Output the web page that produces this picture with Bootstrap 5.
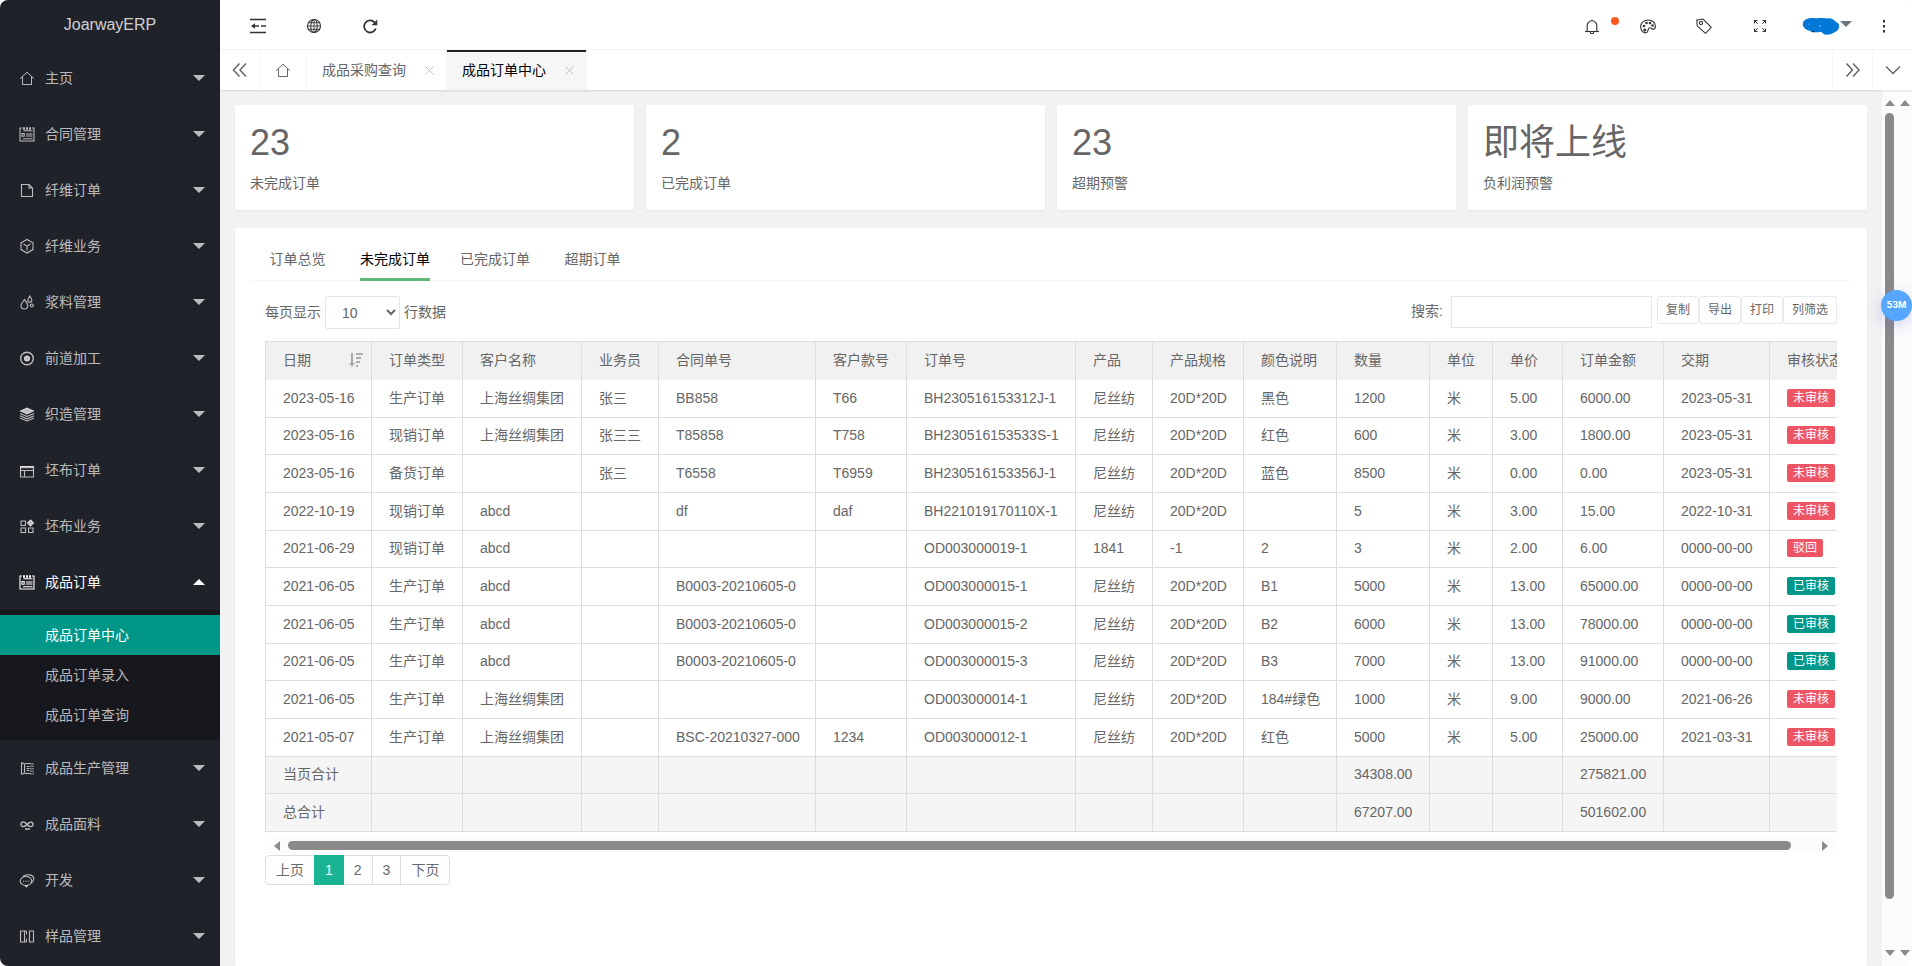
<!DOCTYPE html>
<html lang="zh-CN">
<head>
<meta charset="utf-8">
<meta name="viewport" content="width=device-width, initial-scale=1">
<title>JoarwayERP</title>
<link href="https://cdn.jsdelivr.net/npm/bootstrap@5.3.0/dist/css/bootstrap.min.css" rel="stylesheet">
<style>
  body { font-family: "Liberation Sans", "Noto Sans CJK SC", sans-serif; font-size: 14px; line-height: 20px; color: #666; background: #fff; }
  a { color: inherit; text-decoration: none; }
  svg { display: block; flex: none; }
  .ico { width: 16px; height: 16px; fill: none; stroke: currentColor; stroke-width: 1.1; }
  .app { height: 100vh; border-radius: 8px; background: #f2f2f2; }

  /* sidebar */
  .side { width: 220px; background: #20222a; color: rgba(255,255,255,.7); }
  .brand { height: 50px; font-size: 16px; box-shadow: 0 1px 2px rgba(0,0,0,.15); color: rgba(255,255,255,.8); }
  .side-link { height: 56px; padding: 0 15px 0 19px; gap: 10px; }
  .side-link.open { color: #fff; }
  .tri { width: 0; height: 0; border: 6px solid transparent; border-top-color: currentColor; border-bottom: 0; }
  .tri.up { border-top: 0; border-bottom: 6px solid currentColor; }
  .sub { background: #17181d; padding: 5px 0; }
  .sub a { height: 40px; padding-left: 45px; }
  .sub a.on { background: #009688; color: #fff; }

  /* header and page tabs */
  .topbar { height: 50px; background: #fff; border-bottom: 1px solid #f6f6f6; color: #333; padding-left: 10px; }
  .tool { width: 56px; height: 49px; padding-top: 2px; }
  .tool.user { width: 68px; padding-left: 10px; }
  .dot { width: 8px; height: 8px; top: 17px; right: 1px; background: #ff5722; }
  .pages { height: 40px; background: #fff; box-shadow: 0 1px 2px rgba(0,0,0,.12); z-index: 1; }
  .ctl { width: 40px; border-right: 1px solid #f6f6f6; }
  .ctl.end { border-right: 0; border-left: 1px solid #f6f6f6; }
  .pg { width: 140px; padding: 0 12px 0 15px; border-right: 1px solid #f6f6f6; }
  .pg.home { width: 47px; padding: 0; }
  .pg.on { background: #f6f6f6; color: #000; box-shadow: inset 0 2px #20222a; }
  .x { width: 9px; height: 9px; stroke: #c2c2c2; fill: none; }

  /* content */
  .content { padding: 15px 15px 0; }
  .stats { --bs-gutter-x: 12px; }
  .box { background: #fff; border-radius: 2px; box-shadow: 0 1px 2px rgba(0,0,0,.05); }
  .stat { height: 105px; padding: 15px; }
  .num { font-size: 36px; line-height: 46px; }
  .stat p { margin: 7px 0 0; }
  .panel { margin-top: 18px; padding: 13px 15px 0; }
  .tabs { height: 40px; border-bottom: 1px solid #f6f6f6; }
  .tabs li { padding: 0 15px; }
  .tabs a { min-width: 65px; height: 40px; padding-top: 8px; text-align: center; display: block; }
  .tabs a.on { color: #000; border-bottom: 3px solid #5fb878; }
  .inner { padding: 15px 15px 0; }
  .inner label, .inner label + select + span { padding-bottom: 2px; }
  .len { width: 75px; height: 33px; margin: 0 4px; padding: 0 0 0 12px; border: 1px solid #e6e6e6; background: #fff; color: #666; border-radius: 2px; }
  .find { width: 201px; height: 32px; margin: 0 5px 0 8px; border: 1px solid #e6e6e6; }
  .tb { height: 28px; padding: 0 8px; border: 1px solid #e7eaec; border-radius: 3px; background: #fff; color: #666; font-size: 12px; }

  .grid { table-layout: fixed; width: 1608px; height: 491px; border-collapse: collapse; white-space: nowrap; }
  .grid th, .grid td { border: 1px solid #ddd; padding: 0 0 1px 17px; font-weight: 400; }
  .grid th { background: #f1f1f1; height: 38px; border-bottom: 0; }
  .grid tbody tr { height: 37px; }
  .grid tbody tr:first-child td { border-top: 0; }
  .grid .sum td { background: #f5f5f5; }
  .tag { display: block; width: fit-content; height: 18px; padding: 0 6px; border-radius: 2px; font-size: 12px; line-height: 18px; color: #fff; background: #ed5565; }
  .tag.ok { background: #009688; }
  .c70 { width: 70px; } .c91 { width: 91px; } .c106 { width: 106px; } .c93 { width: 93px; } .c77 { width: 77px; }
  .c119 { width: 119px; } .c157 { width: 157px; } .c169 { width: 169px; } .c63 { width: 63px; } .c101 { width: 101px; }

  .hbar { height: 15px; margin-top: 6px; padding: 0 9px; background: #fcfcfc; color: #8a8a8a; gap: 8px; }
  .hbar i, .vbar i { background: #8a8a8a; border-radius: 5px; }
  .hbar i { height: 9px; flex: 0 1 1503px; }
  .pager { margin: 2px 0 0; --bs-pagination-font-size: 14px; --bs-pagination-padding-x: 10px; --bs-pagination-padding-y: 4px; --bs-pagination-color: #676a6c; --bs-pagination-border-color: #ddd; --bs-pagination-active-bg: #1ab394; --bs-pagination-active-border-color: #1ab394; --bs-pagination-border-radius: 4px; }

  .vbar { width: 15px; padding: 10px 0; background: #fcfcfc; color: #8a8a8a; }
  .vbar i { width: 9px; flex: 0 1 786px; margin-top: 7px; }
  .ball { width: 31px; height: 31px; top: 290px; right: 0; z-index: 5; background: #56a5ff; color: #fff; font: bold 9px/30px Inter, sans-serif; box-shadow: 0 4px 16px rgba(80,80,220,.25); }
</style>
</head>
<body class="overflow-hidden">
<svg width="0" height="0" class="position-absolute" aria-hidden="true">
  <symbol id="home" viewBox="0 0 16 16"><path d="M1 8.700 8 2.200l7 6.500M3.500 7v7.500h9V7" stroke-width="1"/></symbol>
  <symbol id="form" viewBox="0 0 16 16"><path d="M3 2H1v13h14V2h-2M4.500 4.800h9M7 8h6.500M7 10h6.500M4 12.700h9.500"/><path d="M3 7.500h2.200v2.800H3z"/><path d="M4 2.500h2M7 2.500h2M10 2.500h2" stroke-width="2.500"/></symbol>
  <symbol id="file" viewBox="0 0 16 16"><path d="M2.500 2.500h7.500l3.500 3.500v8.500h-11zM10 2.500V6h3.500"/></symbol>
  <symbol id="cube" viewBox="0 0 16 16"><path d="M8 1.500 14 4.800v6.800L8 15 2 11.600V4.800zM4.500 6 8 8.200 11.500 6M8 8.200V12.500"/></symbol>
  <symbol id="drops" viewBox="0 0 16 16"><path d="M5.500 5.500C4 8 2 9.500 2 11.600a3.400 3.400 0 0 0 6.800 0C8.800 9.500 7 8 5.500 5.500zM10.800 2C10 3.800 8.800 4.800 8.800 6.200a2 2 0 0 0 4 0C12.800 4.800 11.600 3.800 10.800 2z"/><circle cx="12.800" cy="11.500" r="1.500"/></symbol>
  <symbol id="radio" viewBox="0 0 16 16"><circle cx="8" cy="8.500" r="6.300" stroke-width="1.400"/><circle cx="8" cy="8.500" r="2.500" fill="currentColor"/></symbol>
  <symbol id="layers" viewBox="0 0 16 16"><path d="M1.500 5 8 2l6.500 3L8 8z" fill="currentColor"/><path d="M1 7.500 8 10.500l7-3M1 9.800l7 3 7-3M1 12l7 3 7-3"/></symbol>
  <symbol id="window" viewBox="0 0 16 16"><path d="M1.500 4.500h13v10.500h-13zM1.500 8.500h13M5.500 8.500V15"/><path d="M1.500 5.200h13" stroke-width="2"/></symbol>
  <symbol id="apps" viewBox="0 0 16 16"><path d="M2 3h4.500v4.500H2zM2 10h4.500v4.500H2zM9.500 10H14v4.500H9.500z"/><path d="m11.500 2 3 3-3 3-3-3z" fill="currentColor"/></symbol>
  <symbol id="list" viewBox="0 0 16 16"><path d="M2.500 2.500v12M2.500 2.500 5.500 4v9L2.500 14.500M6 3.500h5.500M6 13.500h5.500M7.500 6.500h3M7.500 8.500h3M7.500 10.500h3"/><path d="M12 3v11.500M14 3v11.500" stroke-dasharray="1.500 1"/></symbol>
  <symbol id="link" viewBox="0 0 16 16"><path d="M8 8.500C6 5.500 2 5 2 8.300S6 11 8 8.500s6-3.500 6-.2S10 11 8 8.500zM6 13h5" stroke-width="1.400"/></symbol>
  <symbol id="chat" viewBox="0 0 16 16"><ellipse cx="7" cy="9" rx="5.800" ry="4.500"/><path d="M4 4.500C7 1.500 14.800 2.300 14.800 6.800c0 2-1 3.200-2.300 4M4 9.200h1.200M6.500 9.200h1.200M9 9.200h1.200M6 13.500l1.500 1.500 1.500-1.800"/></symbol>
  <symbol id="cols" viewBox="0 0 16 16"><path d="M1.500 3h4v11h-4zM10.500 3h4v11h-4zM7.500 3v3.500M7.500 10.500V14M5.500 3h2M5.500 14h2"/></symbol>
</svg>

<div class="app d-flex overflow-hidden position-relative">
  <nav class="side flex-shrink-0 overflow-hidden" aria-label="主菜单">
    <div class="brand d-flex align-items-center justify-content-center">JoarwayERP</div>
    <a href="#" class="side-link d-flex align-items-center"><svg class="ico"><use href="#home"/></svg><span class="flex-fill">主页</span><span class="tri"></span></a>
    <a href="#" class="side-link d-flex align-items-center"><svg class="ico"><use href="#form"/></svg><span class="flex-fill">合同管理</span><span class="tri"></span></a>
    <a href="#" class="side-link d-flex align-items-center"><svg class="ico"><use href="#file"/></svg><span class="flex-fill">纤维订单</span><span class="tri"></span></a>
    <a href="#" class="side-link d-flex align-items-center"><svg class="ico"><use href="#cube"/></svg><span class="flex-fill">纤维业务</span><span class="tri"></span></a>
    <a href="#" class="side-link d-flex align-items-center"><svg class="ico"><use href="#drops"/></svg><span class="flex-fill">浆料管理</span><span class="tri"></span></a>
    <a href="#" class="side-link d-flex align-items-center"><svg class="ico"><use href="#radio"/></svg><span class="flex-fill">前道加工</span><span class="tri"></span></a>
    <a href="#" class="side-link d-flex align-items-center"><svg class="ico"><use href="#layers"/></svg><span class="flex-fill">织造管理</span><span class="tri"></span></a>
    <a href="#" class="side-link d-flex align-items-center"><svg class="ico"><use href="#window"/></svg><span class="flex-fill">坯布订单</span><span class="tri"></span></a>
    <a href="#" class="side-link d-flex align-items-center"><svg class="ico"><use href="#apps"/></svg><span class="flex-fill">坯布业务</span><span class="tri"></span></a>
    <a href="#" class="side-link open d-flex align-items-center"><svg class="ico"><use href="#form"/></svg><span class="flex-fill">成品订单</span><span class="tri up"></span></a>
    <div class="sub">
      <a href="#" class="on d-flex align-items-center">成品订单中心</a>
      <a href="#" class="d-flex align-items-center">成品订单录入</a>
      <a href="#" class="d-flex align-items-center">成品订单查询</a>
    </div>
    <a href="#" class="side-link d-flex align-items-center"><svg class="ico"><use href="#list"/></svg><span class="flex-fill">成品生产管理</span><span class="tri"></span></a>
    <a href="#" class="side-link d-flex align-items-center"><svg class="ico"><use href="#link"/></svg><span class="flex-fill">成品面料</span><span class="tri"></span></a>
    <a href="#" class="side-link d-flex align-items-center"><svg class="ico"><use href="#chat"/></svg><span class="flex-fill">开发</span><span class="tri"></span></a>
    <a href="#" class="side-link d-flex align-items-center"><svg class="ico"><use href="#cols"/></svg><span class="flex-fill">样品管理</span><span class="tri"></span></a>
  </nav>

  <div class="d-flex flex-column flex-fill overflow-hidden">
    <header class="topbar d-flex flex-shrink-0">
      <a href="#" class="tool d-flex align-items-center justify-content-center" aria-label="折叠菜单"><svg class="ico" viewBox="0 0 16 16"><path d="M0 1.500h16M11 8h5M0 14.500h16" stroke-width="1.500"/><path d="M5 5.200v5.600L1 8z" fill="currentColor" stroke="none"/><path d="M4 8h5" stroke-width="1.500"/></svg></a>
      <a href="#" class="tool d-flex align-items-center justify-content-center" aria-label="网站"><svg class="ico" viewBox="0 0 16 16"><circle cx="8" cy="8" r="6.500"/><ellipse cx="8" cy="8" rx="3.200" ry="6.500"/><path d="M8 1.500v13M1.500 8h13M2.500 4.700h11M2.500 11.300h11" stroke-width=".9"/></svg></a>
      <a href="#" class="tool d-flex align-items-center justify-content-center" aria-label="刷新"><svg class="ico" viewBox="0 0 16 16"><path d="M13.800 10.500A6 6 0 1 1 12.500 4.300" stroke-width="1.800"/><path d="M15.300 1.500v5.800H9.500z" fill="currentColor" stroke="none"/></svg></a>
      <a href="#" class="tool d-flex align-items-center justify-content-center position-relative ms-auto" aria-label="消息"><svg class="ico" viewBox="0 0 16 16"><path d="M1 13.500h14M3.200 13.500V7.500a4.800 4.800 0 0 1 9.600 0v6M6.300 14a1.700 1.700 0 0 0 3.400 0M8 1.500v1.200"/></svg><span class="dot position-absolute rounded-circle"></span></a>
      <a href="#" class="tool d-flex align-items-center justify-content-center" aria-label="主题"><svg class="ico" viewBox="0 0 16 16"><path d="M5 14.800C2.500 14.500.6 11.500.6 8.800.6 4.800 4 2 8.200 2c4 0 7.200 2.600 7.200 6 0 2-.6 3.200-2 3.200-1.600 0-2-1.500-3.600-1.500-2 0-1.500 2-2 3.500-.3 1.200-1.500 1.800-2.800 1.600z"/><circle cx="4" cy="8" r=".8"/><circle cx="6.500" cy="5" r=".8"/><circle cx="10" cy="5" r=".8"/><circle cx="12.500" cy="7.500" r=".8"/><circle cx="4.800" cy="12" r="1" fill="currentColor"/></svg></a>
      <a href="#" class="tool d-flex align-items-center justify-content-center" aria-label="便签"><svg class="ico" viewBox="0 0 16 16"><path d="M.8 2 7 1l8.300 8.300-5.800 6L1.200 7.800z"/><circle cx="5" cy="5" r="1.600"/></svg></a>
      <a href="#" class="tool d-flex align-items-center justify-content-center" aria-label="全屏"><svg class="ico" viewBox="0 0 16 16"><path d="M2.500 5.500v-3h3M2.500 2.500l3.300 3.300M10.500 2.500h3v3M13.500 2.500l-3.300 3.300M2.500 10.500v3h3M2.500 13.500l3.300-3.300M10.500 13.500h3v-3M13.500 13.500l-3.300-3.300" stroke-width="1"/></svg></a>
      <a href="#" class="tool user d-flex align-items-center justify-content-center" aria-label="用户"><svg width="38" height="20" viewBox="0 0 40 20"><path d="M1 7C2 2 9 1 15 2c4-1 9 0 12 0 5-1 7 3 11 5 2 2 1 6-1 8-4 2-5 4-10 4-4 1-5-2-7-3-4 1-9 1-12-1C4 14 0 11 1 7z" fill="#0078d7"/><path d="M10 16h3" stroke="#223" stroke-width="1"/><path d="M18 10h2M7 8h1" stroke="#9cf"/></svg><span class="tri text-secondary mb-1"></span></a>
      <a href="#" class="tool d-flex align-items-center justify-content-center" aria-label="更多"><svg width="16" height="16" viewBox="0 0 16 16"><path d="M7 2h2v2.500H7zM7 7h2v2.500H7zM7 12h2v2.500H7z" fill="#333"/></svg></a>
    </header>

    <div class="pages d-flex flex-shrink-0 position-relative">
      <a href="#" class="ctl d-flex align-items-center justify-content-center" aria-label="向左"><svg class="ico" viewBox="0 0 16 16"><path d="M7.500 1.500 1.500 8l6 6.500M14 1.500 8 8l6 6.500" stroke-width="1.500"/></svg></a>
      <a href="#" class="pg home d-flex align-items-center justify-content-center" aria-label="首页"><svg class="ico"><use href="#home"/></svg></a>
      <a href="#" class="pg d-flex align-items-center justify-content-between">成品采购查询<svg class="x" viewBox="0 0 9 9"><path d="m.5.5 8 8m0-8-8 8"/></svg></a>
      <a href="#" class="pg on d-flex align-items-center justify-content-between">成品订单中心<svg class="x" viewBox="0 0 9 9"><path d="m.5.5 8 8m0-8-8 8"/></svg></a>
      <a href="#" class="ctl end d-flex align-items-center justify-content-center ms-auto" aria-label="向右"><svg class="ico" viewBox="0 0 16 16"><path d="m1.500 1.500 6 6.500-6 6.500M8 1.500 14 8l-6 6.500" stroke-width="1.500"/></svg></a>
      <a href="#" class="ctl end d-flex align-items-center justify-content-center" aria-label="页面操作"><svg class="ico" viewBox="0 0 16 16"><path d="m1 4.500 7 7 7-7" stroke-width="1.500"/></svg></a>
    </div>

    <div class="d-flex flex-fill overflow-hidden">
      <main class="content d-flex flex-column flex-fill overflow-hidden">
        <div class="row stats">
          <div class="col-3"><div class="box stat"><div class="num">23</div><p>未完成订单</p></div></div>
          <div class="col-3"><div class="box stat"><div class="num">2</div><p>已完成订单</p></div></div>
          <div class="col-3"><div class="box stat"><div class="num">23</div><p>超期预警</p></div></div>
          <div class="col-3"><div class="box stat"><div class="num">即将上线</div><p>负利润预警</p></div></div>
        </div>

        <section class="box panel flex-fill">
          <ul class="tabs d-flex list-unstyled mb-0">
            <li><a href="#">订单总览</a></li>
            <li><a href="#" class="on">未完成订单</a></li>
            <li><a href="#">已完成订单</a></li>
            <li><a href="#">超期订单</a></li>
          </ul>
          <div class="inner">
            <div class="d-flex justify-content-between mb-2 pb-1">
              <div class="d-flex align-items-center"><label for="len">每页显示</label><select id="len" class="len"><option>10</option><option>25</option><option>50</option></select><span>行数据</span></div>
              <div class="d-flex align-items-start">
                <div class="d-flex align-items-center"><label for="find">搜索:</label><input id="find" class="find" type="search"></div>
                <button type="button" class="tb">复制</button><button type="button" class="tb">导出</button><button type="button" class="tb">打印</button><button type="button" class="tb">列筛选</button>
              </div>
            </div>
            <div class="overflow-hidden">
              <table class="grid">
                <colgroup><col class="c106"><col class="c91"><col class="c119"><col class="c77"><col class="c157"><col class="c91"><col class="c169"><col class="c77"><col class="c91"><col class="c93"><col class="c93"><col class="c63"><col class="c70"><col class="c101"><col class="c106"><col></colgroup>
                <thead><tr><th><span class="d-flex align-items-center justify-content-between pe-2">日期<svg width="14" height="14" viewBox="0 0 14 14" fill="#aaa"><path d="M2 0h2v10h2l-3 4-3-4h2zM7 0h7v2H7zM7 4h5v2H7zM7 8h4v2H7zM7 12h2v2H7z"/></svg></span></th><th>订单类型</th><th>客户名称</th><th>业务员</th><th>合同单号</th><th>客户款号</th><th>订单号</th><th>产品</th><th>产品规格</th><th>颜色说明</th><th>数量</th><th>单位</th><th>单价</th><th>订单金额</th><th>交期</th><th>审核状态</th></tr></thead>
                <tbody>
                  <tr><td>2023-05-16</td><td>生产订单</td><td>上海丝绸集团</td><td>张三</td><td>BB858</td><td>T66</td><td>BH230516153312J-1</td><td>尼丝纺</td><td>20D*20D</td><td>黑色</td><td>1200</td><td>米</td><td>5.00</td><td>6000.00</td><td>2023-05-31</td><td><span class="tag">未审核</span></td></tr>
                  <tr><td>2023-05-16</td><td>现销订单</td><td>上海丝绸集团</td><td>张三三</td><td>T85858</td><td>T758</td><td>BH230516153533S-1</td><td>尼丝纺</td><td>20D*20D</td><td>红色</td><td>600</td><td>米</td><td>3.00</td><td>1800.00</td><td>2023-05-31</td><td><span class="tag">未审核</span></td></tr>
                  <tr><td>2023-05-16</td><td>备货订单</td><td></td><td>张三</td><td>T6558</td><td>T6959</td><td>BH230516153356J-1</td><td>尼丝纺</td><td>20D*20D</td><td>蓝色</td><td>8500</td><td>米</td><td>0.00</td><td>0.00</td><td>2023-05-31</td><td><span class="tag">未审核</span></td></tr>
                  <tr><td>2022-10-19</td><td>现销订单</td><td>abcd</td><td></td><td>df</td><td>daf</td><td>BH221019170110X-1</td><td>尼丝纺</td><td>20D*20D</td><td></td><td>5</td><td>米</td><td>3.00</td><td>15.00</td><td>2022-10-31</td><td><span class="tag">未审核</span></td></tr>
                  <tr><td>2021-06-29</td><td>现销订单</td><td>abcd</td><td></td><td></td><td></td><td>OD003000019-1</td><td>1841</td><td>-1</td><td>2</td><td>3</td><td>米</td><td>2.00</td><td>6.00</td><td>0000-00-00</td><td><span class="tag">驳回</span></td></tr>
                  <tr><td>2021-06-05</td><td>生产订单</td><td>abcd</td><td></td><td>B0003-20210605-0</td><td></td><td>OD003000015-1</td><td>尼丝纺</td><td>20D*20D</td><td>B1</td><td>5000</td><td>米</td><td>13.00</td><td>65000.00</td><td>0000-00-00</td><td><span class="tag ok">已审核</span></td></tr>
                  <tr><td>2021-06-05</td><td>生产订单</td><td>abcd</td><td></td><td>B0003-20210605-0</td><td></td><td>OD003000015-2</td><td>尼丝纺</td><td>20D*20D</td><td>B2</td><td>6000</td><td>米</td><td>13.00</td><td>78000.00</td><td>0000-00-00</td><td><span class="tag ok">已审核</span></td></tr>
                  <tr><td>2021-06-05</td><td>生产订单</td><td>abcd</td><td></td><td>B0003-20210605-0</td><td></td><td>OD003000015-3</td><td>尼丝纺</td><td>20D*20D</td><td>B3</td><td>7000</td><td>米</td><td>13.00</td><td>91000.00</td><td>0000-00-00</td><td><span class="tag ok">已审核</span></td></tr>
                  <tr><td>2021-06-05</td><td>生产订单</td><td>上海丝绸集团</td><td></td><td></td><td></td><td>OD003000014-1</td><td>尼丝纺</td><td>20D*20D</td><td>184#绿色</td><td>1000</td><td>米</td><td>9.00</td><td>9000.00</td><td>2021-06-26</td><td><span class="tag">未审核</span></td></tr>
                  <tr><td>2021-05-07</td><td>生产订单</td><td>上海丝绸集团</td><td></td><td>BSC-20210327-000</td><td>1234</td><td>OD003000012-1</td><td>尼丝纺</td><td>20D*20D</td><td>红色</td><td>5000</td><td>米</td><td>5.00</td><td>25000.00</td><td>2021-03-31</td><td><span class="tag">未审核</span></td></tr>
                  <tr class="sum"><td>当页合计</td><td></td><td></td><td></td><td></td><td></td><td></td><td></td><td></td><td></td><td>34308.00</td><td></td><td></td><td>275821.00</td><td></td><td></td></tr>
                  <tr class="sum"><td>总合计</td><td></td><td></td><td></td><td></td><td></td><td></td><td></td><td></td><td></td><td>67207.00</td><td></td><td></td><td>501602.00</td><td></td><td></td></tr>
                </tbody>
              </table>
            </div>
            <div class="hbar d-flex align-items-center" aria-hidden="true">
              <svg width="6" height="10" viewBox="0 0 6 10" fill="currentColor"><path d="M6 0v10L0 5z"/></svg><i></i>
              <svg class="ms-auto" width="6" height="10" viewBox="0 0 6 10" fill="currentColor"><path d="M0 0v10l6-5z"/></svg>
            </div>
            <ul class="pagination pager">
              <li class="page-item"><a class="page-link" href="#">上页</a></li>
              <li class="page-item active"><a class="page-link" href="#">1</a></li>
              <li class="page-item"><a class="page-link" href="#">2</a></li>
              <li class="page-item"><a class="page-link" href="#">3</a></li>
              <li class="page-item"><a class="page-link" href="#">下页</a></li>
            </ul>
          </div>
        </section>
      </main>
      <div class="vbar d-flex flex-column align-items-center flex-shrink-0" aria-hidden="true">
        <svg width="10" height="6" viewBox="0 0 10 6" fill="currentColor"><path d="M0 6h10L5 0z"/></svg><i></i>
        <svg class="mt-auto" width="10" height="6" viewBox="0 0 10 6" fill="currentColor"><path d="M0 0h10L5 6z"/></svg>
      </div>
      <div class="vbar d-flex flex-column align-items-center flex-shrink-0" aria-hidden="true">
        <svg width="10" height="6" viewBox="0 0 10 6" fill="currentColor"><path d="M0 6h10L5 0z"/></svg>
        <svg class="mt-auto" width="10" height="6" viewBox="0 0 10 6" fill="currentColor"><path d="M0 0h10L5 6z"/></svg>
      </div>
    </div>
  </div>
  <div class="ball position-absolute rounded-circle text-center">53M</div>
</div>
<script src="https://cdn.jsdelivr.net/npm/bootstrap@5.3.0/dist/js/bootstrap.bundle.min.js"></script>
</body>
</html>
